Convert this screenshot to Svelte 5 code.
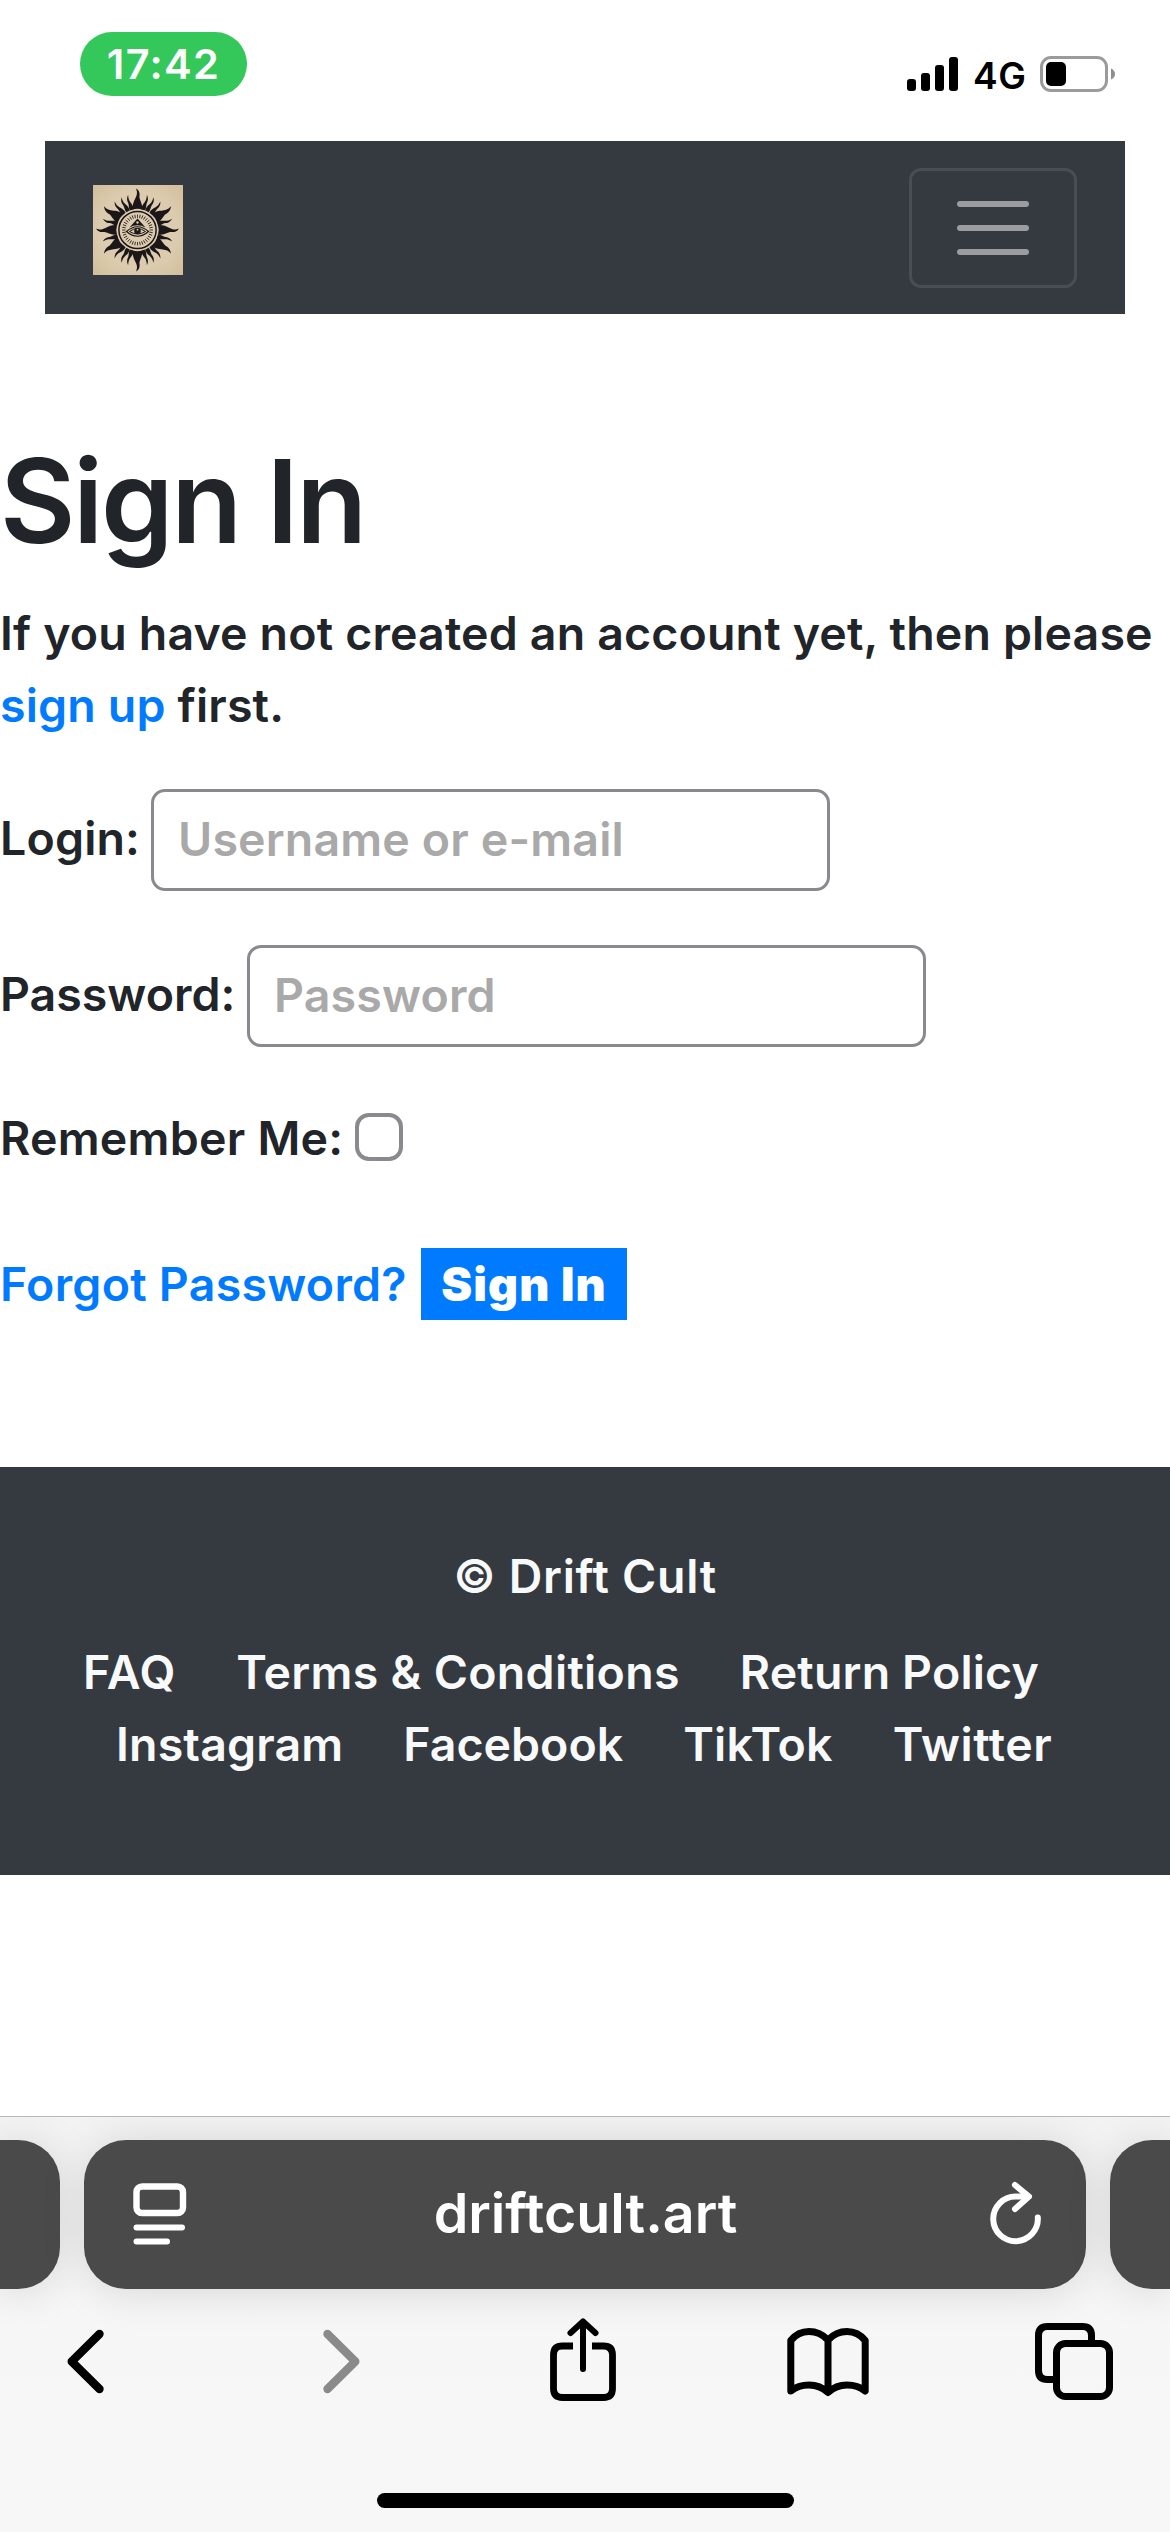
<script>
  // Rays of the sun emblem: angle from the top, and which shape to draw.
  const quadrant = [
    { a: 0, kind: 'main' },
    { a: 16, kind: 'thin' },
    { a: 27, kind: 'thin' },
    { a: 40, kind: 'thin' },
    { a: 56, kind: 'wide' },
    { a: 73, kind: 'thin' },
    { a: 90, kind: 'main' }
  ];
  const shapes = {
    main: 'M-4.800 -20.500 C-5.200 -25 -4 -28 -2 -32 C-0.600 -35 0.300 -37 -1.500 -41.500 C2.300 -39.500 2.400 -36 1.900 -33 C2.400 -29 5.200 -26 4.800 -20.500 Q0 -22 -4.800 -20.500Z',
    wide: 'M-5 -20.500 C-5.800 -25 -4.200 -28 -2 -32 C-0.800 -35 0.300 -37 -1 -41 C2.400 -38.500 3 -35 2.600 -32 C3.200 -28 5.800 -25 5 -20.500 Q0 -22 -5 -20.500Z',
    thin: 'M-1.900 -20.800 C-2.700 -24 -1.900 -26 -0.700 -29 C0 -31 0.100 -33 -0.700 -36.500 C1.900 -33.500 2.100 -31 1.500 -28.500 C1.300 -26 2.600 -24 1.900 -20.800Z'
  };
  const rays = [];
  for (const { a, kind } of quadrant) {
    const base = { d: shapes[kind] };
    rays.push({ ...base, t: `rotate(${a})` });
    if (a !== 0) rays.push({ ...base, t: `scale(-1 1) rotate(${a})` });
    if (a !== 90) rays.push({ ...base, t: `scale(1 -1) rotate(${a})` });
    if (a !== 0 && a !== 90) rays.push({ ...base, t: `scale(-1 -1) rotate(${a})` });
  }
  const ticks = Array.from({ length: 36 }, (_, i) => i * 10);

  const pageLinks = [
    { label: 'FAQ', cls: 'faq' },
    { label: 'Terms & Conditions', cls: 'terms' },
    { label: 'Return Policy', cls: 'policy' }
  ];
  const socialLinks = [
    { label: 'Instagram', cls: 'insta' },
    { label: 'Facebook', cls: 'face' },
    { label: 'TikTok', cls: 'tiktok' },
    { label: 'Twitter', cls: 'twit' }
  ];
</script>

<div class="screen">
  <header class="status">
    <span class="time">17:42</span>
    <div class="indicators">
      <svg class="signal" width="51" height="34" viewBox="0 0 51 34">
        <rect x="0" y="22" width="9" height="12" rx="3" />
        <rect x="14" y="16" width="9" height="18" rx="3" />
        <rect x="28" y="8" width="9" height="26" rx="3" />
        <rect x="42" y="0" width="9" height="34" rx="3" />
      </svg>
      <span class="network">4G</span>
      <svg class="battery" width="76" height="36" viewBox="0 0 76 36">
        <rect x="1.500" y="1.500" width="65" height="33" rx="9.500" fill="none" stroke="#9b9b9b" stroke-width="3" />
        <rect x="6" y="6" width="20" height="24" rx="5" />
        <path d="M71 12.500 Q75 14.500 75 18 Q75 21.500 71 23.500Z" fill="#8e8e8e" />
      </svg>
    </div>
  </header>

  <nav class="navbar">
    <svg class="logo" width="90" height="90" viewBox="0 0 90 90">
      <defs>
        <radialGradient id="paper" cx="50%" cy="50%" r="72%">
          <stop offset="0.600" stop-color="#dccbae" />
          <stop offset="1" stop-color="#d0bd9c" />
        </radialGradient>
      </defs>
      <rect width="90" height="90" fill="url(#paper)" />
      <g transform="translate(44.500 45)" fill="#1b1618">
        {#each rays as ray}
          <path d={ray.d} transform={ray.t} />
        {/each}
        <circle r="20.500" fill="#dccbae" />
        <circle r="18.600" fill="none" stroke="#1b1618" stroke-width="1.500" />
        {#each ticks as t}
          <path d="M0 -15.500V-12" transform="rotate({t})" stroke="#1b1618" stroke-width="0.800" />
        {/each}
        <path d="M0 -12.500 L9.500 2.500 H-9.500Z" fill="#dccbae" />
        <path d="M0 -11.500 L8 -2.500 Q0 -7 -8 -2.500Z" />
        <circle cy="-7.500" r="1.200" fill="#dccbae" />
        <path d="M-11 1.500 Q0 -8 11 1.500 Q0 11 -11 1.500Z" fill="#dccbae" stroke="#1b1618" stroke-width="1.200" />
        <path d="M-8 1.500 Q0 -4.500 8 1.500 Q0 6.500 -8 1.500Z" fill="#dccbae" stroke="#1b1618" stroke-width="1" />
        <circle cy="1" r="3.300" />
        <circle cy="-0.300" r="0.900" fill="#dccbae" />
      </g>
    </svg>
    <button class="toggler" aria-label="Toggle navigation">
      <span></span><span></span><span></span>
    </button>
  </nav>

  <main>
    <h1>Sign In</h1>
    <p class="intro">
      If you have not created an account yet, then please<br /><a href="#signup">sign up</a> first.
    </p>
    <form>
      <div class="row">
        <label class="l-login" for="login">Login:</label>
        <input id="login" class="field" type="text" placeholder="Username or e-mail" />
      </div>
      <div class="row">
        <label class="l-pass" for="password">Password:</label>
        <input id="password" class="field" type="password" placeholder="Password" />
      </div>
      <div class="row remember">
        <label class="l-rem" for="remember">Remember Me:</label>
        <input id="remember" type="checkbox" />
      </div>
      <div class="actions">
        <a class="forgot" href="#forgot">Forgot Password?</a>
        <button class="submit" type="button">Sign In</button>
      </div>
    </form>
  </main>

  <footer>
    <p class="copy">© Drift Cult</p>
    <div class="links pages">
      {#each pageLinks as l}<a class={l.cls} href="#{l.cls}">{l.label}</a>{/each}
    </div>
    <div class="links social">
      {#each socialLinks as l}<a class={l.cls} href="#{l.cls}">{l.label}</a>{/each}
    </div>
  </footer>

  <section class="browser">
    <div class="tabs">
      <div class="tab side-left"></div>
      <div class="tab address">
        <svg width="54" height="62" viewBox="0 0 54 62" fill="none" stroke="#fff" stroke-width="6.400" stroke-linecap="round">
          <rect x="3.500" y="3.500" width="46.500" height="26.500" rx="5.500" />
          <path d="M3.500 44.500H49M3.500 58.500H34" stroke-width="6" />
        </svg>
        <span class="domain">driftcult.art</span>
        <svg width="52" height="66" viewBox="0 0 52 66" fill="none" stroke="#fff" stroke-width="6" stroke-linecap="round" stroke-linejoin="round">
          <path d="M47.800 36.500A22.300 22.300 0 1 1 25.500 15.600H38" />
          <path d="M25 4L39 15.600L25 28" />
        </svg>
      </div>
      <div class="tab side-right"></div>
    </div>
    <div class="toolbar">
      <svg width="38" height="86" viewBox="0 0 38 86" fill="none" stroke="#000" stroke-width="8.400" stroke-linecap="round" stroke-linejoin="round">
        <path d="M32.500 17L4.700 44.500L32.500 72" />
      </svg>
      <svg class="forward" width="38" height="86" viewBox="0 0 38 86" fill="none" stroke="#8a8a8a" stroke-width="8.400" stroke-linecap="round" stroke-linejoin="round">
        <path d="M4.500 17L32.300 44.500L4.500 72" />
      </svg>
      <svg class="share" width="66" height="86" viewBox="0 0 66 86" fill="none" stroke="#000" stroke-width="6.800">
        <path d="M23 29H12.500Q3.500 29 3.500 38V71.500Q3.500 80.500 12.500 80.500H53.500Q62.500 80.500 62.500 71.500V38Q62.500 29 53.500 29H42" />
        <path d="M33 6V52M20.500 16L33 4.500L45.500 16" stroke-width="6" stroke-linecap="round" stroke-linejoin="round" />
      </svg>
      <svg class="book" width="82" height="86" viewBox="0 0 82 86" fill="none" stroke="#000" stroke-width="7" stroke-linecap="round" stroke-linejoin="round">
        <path d="M41 23Q33 14.500 22 14.500Q11 14.500 3.800 23.500V74Q11 68 22 68Q33 68 41 75.500Q49 68 60 68Q71 68 78.200 74V23.500Q71 14.500 60 14.500Q49 14.500 41 23ZV75" />
      </svg>
      <svg class="pages-icon" width="78" height="86" viewBox="0 0 78 86" fill="none" stroke="#000" stroke-width="7">
        <path d="M18 62.500H12.500Q3.500 62.500 3.500 53.500V18.500Q3.500 9.500 12.500 9.500H47.500Q56.500 9.500 56.500 18.500V25" />
        <rect x="21.500" y="26.500" width="53" height="53" rx="9" />
      </svg>
    </div>
    <div class="home"></div>
  </section>
</div>

<style>
  :global(body) {
    background: #fff;
  }
  * {
    box-sizing: border-box;
  }
  .screen {
    width: 1170px;
    height: 2532px;
    overflow: hidden;
    display: flex;
    flex-direction: column;
    background: #fff;
    font-family: Inter, 'Liberation Sans', sans-serif;
    font-size: 46.5px;
    font-weight: 600;
    line-height: 72px;
    letter-spacing: 0.160px;
    color: #212529;
    white-space: nowrap;
  }
  a {
    color: #007bff;
    text-decoration: none;
  }
  svg {
    display: block;
    flex: none;
  }

  .status {
    height: 141px;
    flex: none;
    display: flex;
    justify-content: space-between;
    align-items: flex-start;
    padding: 32px 54px 0 80px;
  }
  .time {
    width: 167px;
    height: 64px;
    border-radius: 32px;
    background: #34c759;
    color: #fff;
    font-size: 41.500px;
    font-weight: 600;
    line-height: 65px;
    text-align: center;
    letter-spacing: 1.300px;
  }
  .indicators {
    display: flex;
    align-items: center;
    padding-top: 24px;
    height: 60px;
    color: #000;
  }
  .signal {
    margin-right: 15px;
  }
  .network {
    width: 67px;
    font-size: 37px;
    font-weight: 600;
    line-height: 36px;
    padding-top: 3px;
    letter-spacing: 0.500px;
  }

  .navbar {
    margin: 0 45px;
    height: 173px;
    flex: none;
    background: #353940;
    display: flex;
    justify-content: space-between;
    padding: 27px 48px 0;
  }
  .logo {
    margin-top: 17px;
  }
  .toggler {
    width: 168px;
    height: 120px;
    border: 3px solid #494d54;
    border-radius: 12px;
    background: none;
    padding: 0 0 1px;
    display: flex;
    flex-direction: column;
    align-items: center;
    justify-content: center;
    gap: 18px;
  }
  .toggler span {
    width: 72px;
    height: 6px;
    border-radius: 3px;
    background: #9a9c9f;
  }

  main {
    padding-top: 115px;
    height: 1153px;
    flex: none;
  }
  h1 {
    margin: 0 0 24px;
    font-size: 116px;
    line-height: 144px;
    font-weight: 600;
    letter-spacing: -2.400px;
  }
  .intro {
    margin: 0 0 48px;
  }
  .row {
    height: 156px;
    display: flex;
    align-items: flex-start;
  }
  .row label {
    flex: none;
    padding-top: 13px;
  }
  .l-login {
    width: 151px;
  }
  .l-pass {
    width: 247px;
    letter-spacing: 0;
  }
  .l-rem {
    width: 355px;
    letter-spacing: 0.250px;
  }
  input {
    font: inherit;
    letter-spacing: inherit;
    margin: 0;
    outline: none;
  }
  .field {
    width: 679px;
    height: 102px;
    border: 3px solid #8a898e;
    border-radius: 14px;
    background: #fff;
    padding: 0 24px 3px;
  }
  input::placeholder {
    color: #a9a9a9;
    opacity: 1;
  }
  .remember {
    height: 147px;
  }
  .row.remember label {
    padding-top: 1px;
  }
  input[type='checkbox'] {
    appearance: none;
    width: 48px;
    height: 48px;
    margin-top: 12px;
    border: 4px solid #8a898e;
    border-radius: 14px;
    background: #fff;
  }
  .actions {
    display: flex;
  }
  .forgot {
    width: 421px;
    letter-spacing: 0.250px;
  }
  .submit {
    width: 206px;
    height: 72px;
    border: 0;
    padding: 0;
    background: #007bff;
    color: #fff;
    font: inherit;
    font-weight: 900;
    text-align: center;
    letter-spacing: 1.100px;
  }

  footer {
    height: 408px;
    flex: none;
    background: #353940;
    color: #f8f9fa;
    padding-top: 73px;
  }
  .copy {
    margin: 0 0 24px;
    text-align: center;
    letter-spacing: 0.700px;
  }
  .links {
    display: flex;
    height: 72px;
  }
  .links a {
    color: #f8f9fa;
  }
  .pages {
    padding-left: 83px;
    gap: 60px;
  }
  .faq {
    letter-spacing: 0.700px;
  }
  .terms {
    letter-spacing: 0.300px;
  }
  .social {
    padding-left: 116px;
    gap: 60px;
  }
  .face {
    letter-spacing: 0;
  }
  .twit {
    letter-spacing: 0.500px;
  }

  .browser {
    margin-top: 241px;
    height: 416px;
    flex: none;
    border-top: 1px solid #b9b9b9;
    background: linear-gradient(#f3f3f3, #f6f6f6 140px, #f7f7f7);
    overflow: hidden;
  }
  .tabs {
    display: flex;
    gap: 24px;
    padding-top: 23px;
  }
  .tab {
    height: 149px;
    flex: none;
    background: #4a4a4a;
    box-shadow: 0 2px 44px rgba(0, 0, 0, 0.130);
  }
  .side-left {
    width: 60px;
    border-radius: 0 42px 42px 0;
  }
  .side-right {
    width: 60px;
    border-radius: 42px 0 0 42px;
  }
  .address {
    width: 1002px;
    border-radius: 42px;
    display: flex;
    align-items: center;
    justify-content: space-between;
    padding: 0 44px 1px 49px;
    color: #fff;
  }
  .domain {
    flex: 1;
    padding: 0 6px 2px 0;
    text-align: center;
    font-size: 55.500px;
    line-height: 80px;
    letter-spacing: 0;
  }
  .toolbar {
    display: flex;
    padding: 28px 0 0 67px;
  }
  .forward {
    margin-left: 218px;
  }
  .share {
    margin-left: 189px;
  }
  .book {
    margin-left: 171px;
  }
  .pages-icon {
    margin-left: 166px;
  }
  .home {
    width: 417px;
    height: 15px;
    border-radius: 8px;
    background: #000;
    margin: 90px auto 0;
  }
</style>
